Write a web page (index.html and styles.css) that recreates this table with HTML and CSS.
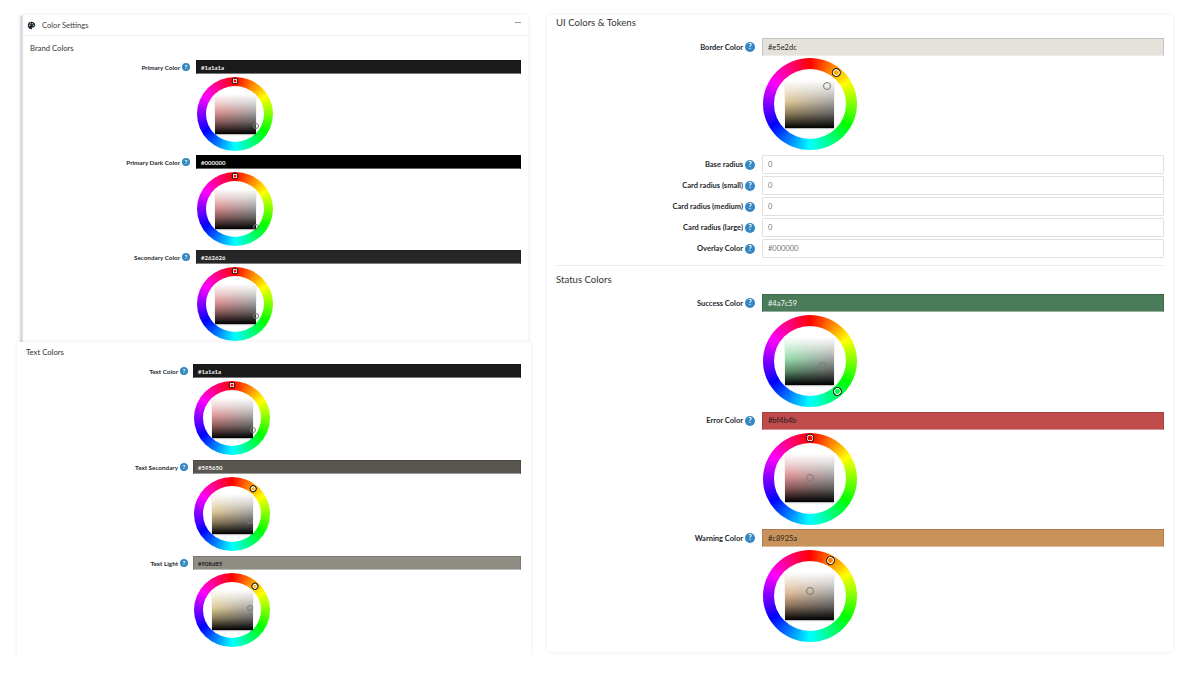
FILE: index.html
```html
<!DOCTYPE html>
<html lang="en">
<head>
<meta charset="utf-8">
<title>Color Settings</title>
<link rel="stylesheet" href="styles.css">
</head>
<body>
<div class="page">
  <div class="col-left">
    <section class="card card-brand">
      <header class="card-head">
        <svg class="palette" viewBox="0 0 24 24" aria-hidden="true"><path d="M12 2C6.5 2 2 6.5 2 12s4.5 10 10 10c.9 0 1.5-.7 1.5-1.5 0-.4-.2-.8-.4-1-.3-.3-.4-.6-.4-1 0-.8.7-1.5 1.5-1.5H16c3.3 0 6-2.7 6-6 0-4.9-4.5-9-10-9z"/><circle cx="6.5" cy="11.5" r="1.6" fill="#fff"/><circle cx="9.5" cy="7.3" r="1.6" fill="#fff"/><circle cx="14.5" cy="7.3" r="1.6" fill="#fff"/><circle cx="17.5" cy="11.5" r="1.6" fill="#fff"/></svg>
        <span class="head-title">Color Settings</span>
        <span class="minimize"></span>
      </header>
      <div class="card-body">
        <h3 class="group-title">Brand Colors</h3>
        <div class="field">
          <div class="label"><span>Primary Color</span><i class="help">?</i></div>
          <div class="control">
            <div class="swatch on-dark" style="background:#1a1a1a">#1a1a1a</div>
            <div class="wheel" style="--h:0;--s:0;--l:0.2"><div class="hole"><div class="sq"><span class="sl-dot"></span></div></div><span class="arm"><span class="hue-dot"></span></span></div>
          </div>
        </div>
        <div class="field">
          <div class="label"><span>Primary Dark Color</span><i class="help">?</i></div>
          <div class="control">
            <div class="swatch on-dark" style="background:#000000">#000000</div>
            <div class="wheel" style="--h:0;--s:0;--l:0.05"><div class="hole"><div class="sq"><span class="sl-dot"></span></div></div><span class="arm"><span class="hue-dot"></span></span></div>
          </div>
        </div>
        <div class="field">
          <div class="label"><span>Secondary Color</span><i class="help">?</i></div>
          <div class="control">
            <div class="swatch on-dark" style="background:#262626">#262626</div>
            <div class="wheel" style="--h:0;--s:0;--l:0.2"><div class="hole"><div class="sq"><span class="sl-dot"></span></div></div><span class="arm"><span class="hue-dot"></span></span></div>
          </div>
        </div>
      </div>
    </section>

    <section class="card card-text">
      <h3 class="group-title">Text Colors</h3>
      <div class="field">
        <div class="label"><span>Text Color</span><i class="help">?</i></div>
        <div class="control">
          <div class="swatch on-dark" style="background:#1a1a1a">#1a1a1a</div>
          <div class="wheel" style="--h:0;--s:0;--l:0.2"><div class="hole"><div class="sq"><span class="sl-dot"></span></div></div><span class="arm"><span class="hue-dot"></span></span></div>
        </div>
      </div>
      <div class="field">
        <div class="label"><span>Text Secondary</span><i class="help">?</i></div>
        <div class="control">
          <div class="swatch on-dark" style="background:#595650">#595650</div>
          <div class="wheel" style="--h:40;--s:0.05;--l:0.33"><div class="hole"><div class="sq"><span class="sl-dot"></span></div></div><span class="arm"><span class="hue-dot"></span></span></div>
        </div>
      </div>
      <div class="field">
        <div class="label"><span>Text Light</span><i class="help">?</i></div>
        <div class="control">
          <div class="swatch on-light" style="background:#908d85">#908d85</div>
          <div class="wheel" style="--h:44;--s:0.05;--l:0.54"><div class="hole"><div class="sq"><span class="sl-dot"></span></div></div><span class="arm"><span class="hue-dot"></span></span></div>
        </div>
      </div>
    </section>
  </div>

  <section class="card card-ui">
    <h3 class="group-title">UI Colors &amp; Tokens</h3>
    <div class="field">
      <div class="label"><span>Border Color</span><i class="help">?</i></div>
      <div class="control">
        <div class="swatch on-light" style="background:#e5e2dc">#e5e2dc</div>
        <div class="wheel" style="--h:40;--s:0.15;--l:0.88"><div class="hole"><div class="sq"><span class="sl-dot"></span></div></div><span class="arm"><span class="hue-dot"></span></span></div>
      </div>
    </div>
    <div class="tokens">
      <div class="token"><div class="label"><span>Base radius</span><i class="help">?</i></div><div class="text-input">0</div></div>
      <div class="token"><div class="label"><span>Card radius (small)</span><i class="help">?</i></div><div class="text-input">0</div></div>
      <div class="token"><div class="label"><span>Card radius (medium)</span><i class="help">?</i></div><div class="text-input">0</div></div>
      <div class="token"><div class="label"><span>Card radius (large)</span><i class="help">?</i></div><div class="text-input">0</div></div>
      <div class="token"><div class="label"><span>Overlay Color</span><i class="help">?</i></div><div class="text-input">#000000</div></div>
    </div>
    <hr class="divider">
    <h3 class="group-title">Status Colors</h3>
    <div class="field">
      <div class="label"><span>Success Color</span><i class="help">?</i></div>
      <div class="control">
        <div class="swatch on-dark" style="background:#4a7c59">#4a7c59</div>
        <div class="wheel" style="--h:138;--s:0.25;--l:0.39"><div class="hole"><div class="sq"><span class="sl-dot"></span></div></div><span class="arm"><span class="hue-dot"></span></span></div>
      </div>
    </div>
    <div class="field">
      <div class="label"><span>Error Color</span><i class="help">?</i></div>
      <div class="control">
        <div class="swatch on-light" style="background:#bf4b4b">#bf4b4b</div>
        <div class="wheel" style="--h:0;--s:0.5;--l:0.52"><div class="hole"><div class="sq"><span class="sl-dot"></span></div></div><span class="arm"><span class="hue-dot"></span></span></div>
      </div>
    </div>
    <div class="field">
      <div class="label"><span>Warning Color</span><i class="help">?</i></div>
      <div class="control">
        <div class="swatch on-light" style="background:#c8925a">#c8925a</div>
        <div class="wheel" style="--h:30;--s:0.5;--l:0.6"><div class="hole"><div class="sq"><span class="sl-dot"></span></div></div><span class="arm"><span class="hue-dot"></span></span></div>
      </div>
    </div>
  </section>
</div>
</body>
</html>
```

FILE: styles.css
```css
* { box-sizing: border-box; }

html, body {
  margin: 0;
  padding: 0;
  background: #ffffff;
}

body {
  font-family: Lato, "Open Sans", "Liberation Sans", sans-serif;
  color: #23282d;
}

.page {
  display: flex;
  align-items: flex-start;
  gap: 19px;
  padding: 15px 0 0 20px;
}

/* ---------- cards ---------- */
.card {
  background: #fff;
  border-radius: 3px;
  box-shadow: 0 0 4px rgba(0, 0, 0, 0.09);
}

.col-left {
  width: 508px;
  display: flex;
  flex-direction: column;
}

.card-brand {
  border-left: 3px solid #dcdce3;
  border-radius: 3px 3px 0 0;
  padding-bottom: 1px;
}

.card-head {
  height: 21px;
  display: flex;
  align-items: center;
  gap: 6px;
  padding: 0 7px 0 4px;
  border-bottom: 1px solid #f1f1f1;
}

.palette {
  width: 9px;
  height: 9px;
  fill: #23282d;
}

.head-title {
  font-size: 7.6px;
  color: #444;
}

.minimize {
  margin-left: auto;
  width: 6px;
  height: 1px;
  background: #9a9a9a;
  margin-top: -5px;
}

.card-brand .card-body {
  padding: 0 7px 0 7px;
}

.card-brand .group-title {
  margin: 6px 0 6px 0;
}

.card-text {
  margin: 0 -3px;
  border-radius: 0 0 3px 3px;
  padding: 4px 10px 9px 9px;
  position: relative;
}

.card-ui {
  width: 626px;
  padding: 2px 9px 10px 9px;
}

/* ---------- titles ---------- */
.group-title {
  margin: 0 0 6px 0;
  font-size: 7.7px;
  line-height: 12px;
  font-weight: 400;
  color: #333;
}

.card-ui .group-title {
  font-size: 9.6px;
  margin: 0 0 9px 0;
}

.card-ui .divider + .group-title {
  margin-bottom: 8px;
}

.divider {
  border: 0;
  border-top: 1px solid #ececec;
  margin: 7px 0 8px 0;
}

/* ---------- fields ---------- */
.field {
  display: grid;
  grid-template-columns: 166px 1fr;
  align-items: start;
  margin-bottom: 4px;
}

.card-text .field {
  grid-template-columns: 167px 1fr;
  margin-bottom: 5px;
}

.card-ui .field,
.card-ui .token {
  grid-template-columns: 206px 1fr;
}

.card-ui .field {
  margin-bottom: 4.5px;
}

.field:last-child {
  margin-bottom: 0;
}

.label {
  height: 14px;
  display: flex;
  align-items: center;
  justify-content: flex-end;
  gap: 2px;
  padding-right: 6px;
  font-size: 6.3px;
  font-weight: 700;
  color: #23282d;
  white-space: nowrap;
}

.card-text .label {
  padding-right: 5px;
}

.card-ui .label {
  height: 18px;
  font-size: 7.5px;
  gap: 2px;
  padding-right: 7px;
}

.help {
  font-style: normal;
  width: 8px;
  height: 8px;
  border-radius: 50%;
  background: #3587c3;
  color: #fff;
  font-size: 6px;
  font-weight: 700;
  line-height: 8px;
  text-align: center;
  flex: none;
}

.card-ui .help {
  width: 10px;
  height: 10px;
  font-size: 7.5px;
  line-height: 10px;
}

.control {
  display: flex;
  flex-direction: column;
  align-items: flex-start;
  gap: 3px;
}

.card-ui .control {
  gap: 2px;
}

.card-ui .divider ~ .field .control {
  gap: 3px;
}

.swatch {
  width: 100%;
  height: 14px;
  display: flex;
  align-items: center;
  padding-left: 4px;
  font-size: 6px;
  font-weight: 700;
  border: 1px solid rgba(0, 0, 0, 0.14);
  border-bottom-color: rgba(255, 255, 255, 0.4);
}

.card-ui .swatch {
  height: 18px;
  padding-left: 5px;
  font-size: 7.5px;
  font-weight: 400;
}

.on-dark { color: #f4f4f4; }
.on-light { color: #1e1e1e; }

/* ---------- tokens ---------- */
.tokens {
  display: flex;
  flex-direction: column;
  gap: 2px;
  margin-top: 5px;
}

.token {
  display: grid;
  align-items: center;
}

.token .label {
  height: 19px;
}

.text-input {
  height: 19px;
  border: 1px solid #e1e1e1;
  border-radius: 1px;
  background: #fff;
  display: flex;
  align-items: center;
  padding-left: 5px;
  font-size: 7.5px;
  color: #777;
}

/* ---------- color wheels ---------- */
.wheel {
  --ring: 8.7px;
  position: relative;
  width: 76px;
  height: 74px;
  margin-left: 1px;
  border-radius: 50%;
  background: conic-gradient(#ff0000, #ffff00, #00ff00, #00ffff, #0000ff, #ff00ff, #ff0000);
  display: flex;
  align-items: center;
  justify-content: center;
}

.card-ui .wheel {
  --ring: 10.6px;
  width: 94px;
  height: 92px;
}

.hole {
  width: calc(100% - 2 * var(--ring));
  height: calc(100% - 2 * var(--ring));
  border-radius: 50%;
  background: #fff;
  display: flex;
  align-items: center;
  justify-content: center;
}

.sq {
  position: relative;
  width: 41px;
  height: 40px;
  background:
    linear-gradient(to bottom, #fff 0%, rgba(255,255,255,0.55) 25%, rgba(255,255,255,0.1) 45%, rgba(0,0,0,0.35) 70%, #000 100%),
    linear-gradient(to right, hsl(calc(var(--h) * 1deg) 55% 70%), #999);
  box-shadow: 0 1px 1px rgba(0,0,0,0.25);
}

.card-ui .sq {
  width: 49px;
  height: 48px;
}

.sl-dot {
  position: absolute;
  left: calc((1 - var(--s)) * 100%);
  top: calc((1 - var(--l)) * 100%);
  width: 6px;
  height: 6px;
  border-radius: 50%;
  border: 1px solid #7a7a7a;
  transform: translate(-50%, -50%);
}

.card-ui .sl-dot {
  width: 8px;
  height: 8px;
}

.arm {
  position: absolute;
  inset: 0;
  transform: rotate(calc(var(--h) * 1deg));
  pointer-events: none;
}

.hue-dot {
  position: absolute;
  left: 50%;
  top: calc(var(--ring) / 2);
  width: 7px;
  height: 7px;
  border-radius: 50%;
  border: 1px solid #1a1a1a;
  box-shadow: inset 0 0 0 1px #fff;
  transform: translate(-50%, -50%);
}

.card-ui .hue-dot {
  width: 9px;
  height: 9px;
}
```
